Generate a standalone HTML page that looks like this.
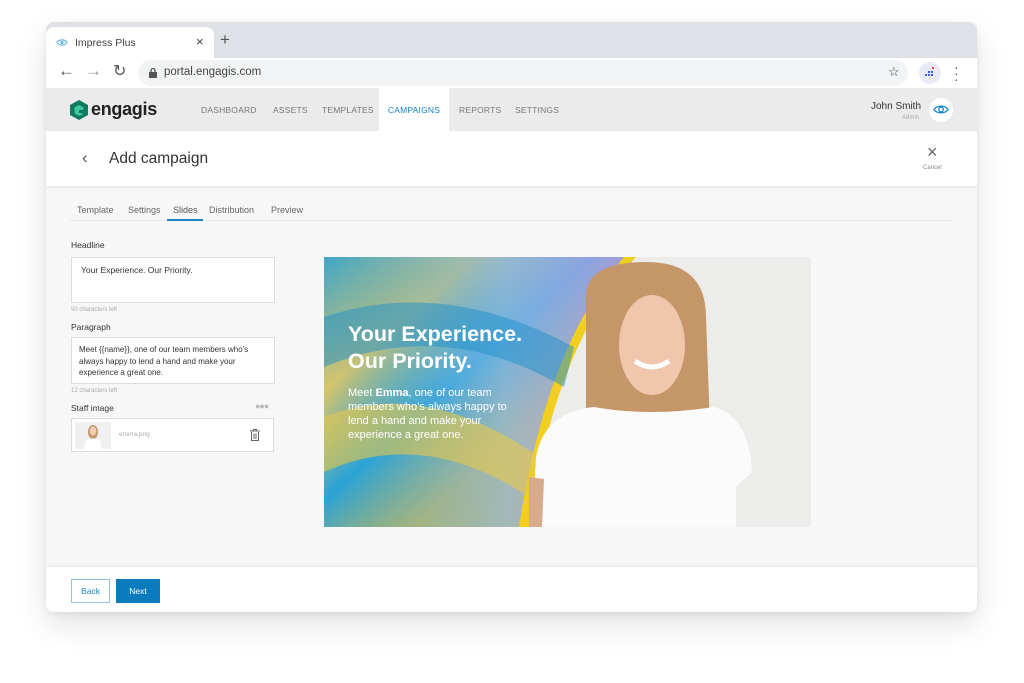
<!DOCTYPE html>
<html><head><meta charset="utf-8"><style>
*{margin:0;padding:0;box-sizing:border-box}
body{width:1024px;height:683px;background:#fff;font-family:"Liberation Sans",sans-serif;position:relative;overflow:hidden}
.win{position:absolute;left:46px;top:22px;width:931px;height:590px;border-radius:8px;background:#f7f7f7;box-shadow:0 12px 30px rgba(0,0,0,.12),0 2px 6px rgba(0,0,0,.06);overflow:hidden}
.abs{position:absolute}
.tabbar{left:0;top:0;width:931px;height:36px;background:#dee1e6}
.tab{left:0;top:5px;width:168px;height:31px;background:#fff;border-radius:8px 8px 0 0}
.addr{left:0;top:36px;width:931px;height:30px;background:#fff}
.url{left:92px;top:2px;width:770px;height:26px;background:#f1f3f4;border-radius:13px}
.nav{left:0;top:66px;width:931px;height:43px;background:#ebebeb}
.navi{top:0;height:43px;line-height:45px;font-size:8.5px;color:#777;letter-spacing:.2px}
.head{left:0;top:109px;width:931px;height:55px;background:#fff;box-shadow:0 2px 3px rgba(0,0,0,.06)}
.foot{left:0;top:545px;width:931px;height:45px;background:#fff;box-shadow:0 -2px 3px rgba(0,0,0,.05)}
.lbl{font-size:8.5px;color:#333}
.tb{font-size:9px;color:#666}
.box{background:#fff;border:1px solid #ddd}
.small{font-size:6px;color:#aaa}
</style></head><body>
<div class="win">
 <div class="abs tabbar"></div>
 <div class="abs tab">
  <svg class="abs" style="left:10px;top:11px" width="12" height="9" viewBox="0 0 12 9"><path d="M1 4.5C3 1 9 1 11 4.5 9 8 3 8 1 4.5Z" fill="none" stroke="#6ab4e8" stroke-width="1.2"/><circle cx="6" cy="4.5" r="1.6" fill="#6ab4e8"/></svg>
  <div class="abs" style="left:29px;top:10px;font-size:10.5px;color:#444">Impress Plus</div>
  <div class="abs" style="left:150px;top:7px;font-size:13px;color:#444">×</div>
 </div>
 <div class="abs" style="left:174px;top:9px;font-size:17px;color:#555;line-height:17px">+</div>
 <div class="abs addr">
  <div class="abs" style="left:12px;top:3px;font-size:17px;color:#555">←</div>
  <div class="abs" style="left:39px;top:3px;font-size:17px;color:#999">→</div>
  <div class="abs" style="left:67px;top:3px;font-size:16px;color:#555">↻</div>
  <div class="abs url">
   <svg class="abs" style="left:11px;top:8px" width="8" height="10"><rect x="0" y="4" width="8" height="6" fill="#555"/><path d="M2 4V2.5a2 2 0 0 1 4 0V4" stroke="#555" fill="none" stroke-width="1.3"/></svg>
   <div class="abs" style="left:26px;top:6px;font-size:11.5px;color:#444">portal.engagis.com</div>
   <div class="abs" style="left:750px;top:4px;font-size:13px;color:#444">☆</div>
  </div>
  <div class="abs" style="left:873px;top:4px;width:22px;height:22px;border-radius:11px;background:#e8eaf6"></div>
  <svg class="abs" style="left:878px;top:9px" width="12" height="12"><g fill="#3b5bd9"><rect x="1" y="7" width="2" height="2"/><rect x="4" y="7" width="2" height="2"/><rect x="7" y="7" width="2" height="2"/><rect x="4" y="4" width="2" height="2"/><rect x="7" y="4" width="2" height="2"/></g><rect x="8" y="0" width="2" height="2" fill="#e33"/></svg>
  <div class="abs" style="left:908px;top:6px;font-size:14px;color:#555;line-height:6px;width:4px;text-align:center">·<br>·<br>·</div>
 </div>
 <div class="abs nav">
  <svg class="abs" style="left:24px;top:12px" width="18" height="20" viewBox="0 0 18 20"><path d="M9 0L18 5V15L9 20L0 15V5Z" fill="#0f7a5f"/><path d="M9 5L13.5 7.5V10H9V12.5L13.5 14L9 16L4.5 13.5V7.5Z" fill="#3fc69a"/></svg>
  <div class="abs" style="left:45px;top:11px;font-size:18px;font-weight:bold;color:#222;letter-spacing:-.3px">engagis</div>
  <div class="abs navi" style="left:155px">DASHBOARD</div>
  <div class="abs navi" style="left:227px">ASSETS</div>
  <div class="abs navi" style="left:276px">TEMPLATES</div>
  <div class="abs navi" style="left:333px;width:70px;background:#fff;text-align:center;color:#1a84c5">CAMPAIGNS</div>
  <div class="abs navi" style="left:413px">REPORTS</div>
  <div class="abs navi" style="left:469px">SETTINGS</div>
  <div class="abs" style="left:825px;top:13px;font-size:10px;color:#333">John Smith</div>
  <div class="abs" style="left:856px;top:27px;font-size:6px;color:#aaa">Admin</div>
  <div class="abs" style="left:883px;top:10px;width:24px;height:24px;border-radius:12px;background:#fff"></div>
  <svg class="abs" style="left:887px;top:16px" width="16" height="11" viewBox="0 0 16 11"><path d="M1 5.5C4 1 12 1 15 5.5 12 10 4 10 1 5.5Z" fill="none" stroke="#1a84c5" stroke-width="1.3"/><circle cx="8" cy="5.5" r="2.3" fill="none" stroke="#1a84c5" stroke-width="1.3"/></svg>
 </div>
 <div class="abs head">
  <div class="abs" style="left:36px;top:17px;font-size:17px;color:#555">‹</div>
  <div class="abs" style="left:63px;top:19px;font-size:15.5px;color:#333">Add campaign</div>
  <div class="abs" style="left:881px;top:12px;font-size:18px;color:#666;line-height:18px">×</div>
  <div class="abs" style="left:877px;top:34px;font-size:6px;color:#888">Cancel</div>
 </div>
 <div class="abs" style="left:24px;top:198px;width:882px;height:1px;background:#e6e6e6"></div>
 <div class="abs tb" style="left:31px;top:183px">Template</div>
 <div class="abs tb" style="left:82px;top:183px">Settings</div>
 <div class="abs tb" style="left:127px;top:183px;color:#555">Slides</div>
 <div class="abs" style="left:121px;top:197px;width:36px;height:2px;background:#1a84c5"></div>
 <div class="abs tb" style="left:163px;top:183px">Distribution</div>
 <div class="abs tb" style="left:225px;top:183px">Preview</div>
 <div class="abs lbl" style="left:25px;top:218px">Headline</div>
 <div class="abs box" style="left:25px;top:235px;width:204px;height:46px"><div style="font-size:8.5px;color:#333;padding:7px 9px">Your Experience. Our Priority.</div></div>
 <div class="abs small" style="left:25px;top:285px">50 characters left</div>
 <div class="abs lbl" style="left:25px;top:300px">Paragraph</div>
 <div class="abs box" style="left:25px;top:315px;width:204px;height:47px"><div style="font-size:8px;color:#333;padding:6px 7px;line-height:11.5px">Meet {{name}}, one of our team members who’s always happy to lend a hand and make your experience a great one.</div></div>
 <div class="abs small" style="left:25px;top:366px">12 characters left</div>
 <div class="abs lbl" style="left:25px;top:381px">Staff image</div>
 <div class="abs" style="left:209px;top:379px;font-size:9px;color:#bbb;letter-spacing:-1px">●●●</div>
 <div class="abs box" style="left:25px;top:396px;width:203px;height:34px">
  <div class="abs" style="left:3px;top:3px;width:36px;height:27px;background:#f0f0f0"></div>
  <svg class="abs" style="left:3px;top:3px" width="36" height="27"><ellipse cx="18" cy="10" rx="5" ry="7" fill="#c49a6c"/><ellipse cx="18" cy="9" rx="3.3" ry="4.5" fill="#f1cdb5"/><path d="M9 27L11 18Q18 15 25 18L27 27Z" fill="#fff"/></svg>
  <div class="abs" style="left:47px;top:12px;font-size:6.5px;color:#aaa">emma.png</div>
  <svg class="abs" style="left:178px;top:10px" width="10" height="12" viewBox="0 0 10 12"><path d="M0 2H10M3.5 2V.5H6.5V2M1.5 3V11.5H8.5V3M4 4.5V10M6 4.5V10" stroke="#666" fill="none" stroke-width="1"/></svg>
 </div>
 <svg class="abs" style="left:278px;top:235px" width="487" height="270" viewBox="0 0 487 270">
  <defs>
   <linearGradient id="g1" x1="0" y1="0" x2="1" y2="1">
    <stop offset="0" stop-color="#3fa6c9"/><stop offset=".25" stop-color="#d9c56a"/><stop offset=".45" stop-color="#2aa3d6"/><stop offset=".65" stop-color="#d0b84d"/><stop offset="1" stop-color="#e5c03a"/>
   </linearGradient>
   <linearGradient id="g2" x1="0" y1="0" x2="1" y2="0"><stop offset="0" stop-color="#1a9fd8" stop-opacity="0"/><stop offset=".6" stop-color="#8db8e8" stop-opacity=".7"/><stop offset="1" stop-color="#b59be0" stop-opacity=".8"/></linearGradient>
  </defs>
  <rect width="487" height="270" fill="#ececea"/>
  <path d="M0 0H312Q230 90 205 270H0Z" fill="#f2cf1f"/>
  <path d="M0 0H300Q222 90 195 270H0Z" fill="url(#g1)"/>
  <path d="M0 0H300Q222 90 195 270H0Z" fill="url(#g2)"/>
  <path d="M0 60Q120 20 250 90L240 130Q120 60 0 110Z" fill="#1e8fc9" opacity=".5"/>
  <path d="M0 160Q100 120 215 200L205 240Q100 170 0 215Z" fill="#e8c84a" opacity=".6"/>
  <path d="M262 40Q262 5 322 5Q382 5 382 60L386 170Q330 185 262 165Z" fill="#c59668"/>
  <ellipse cx="328" cy="88" rx="33" ry="50" fill="#f0c7ad"/>
  <path d="M311 104Q328 116 345 104" stroke="#fff" stroke-width="5" fill="none"/>
  <path d="M208 270L212 200Q220 155 270 150Q325 160 390 150Q425 160 428 215L412 230V270Z" fill="#fbfbfb"/>
  <path d="M205 220L220 222L218 270H205Z" fill="#d9ab8e"/>
 </svg>
 <div class="abs" style="left:302px;top:299px;color:#fff;font-size:21.5px;font-weight:bold;line-height:27px">Your Experience.<br>Our Priority.</div>
 <div class="abs" style="left:302px;top:364px;color:#fff;font-size:11px;line-height:14px;width:163px">Meet <b>Emma</b>, one of our team members who’s always happy to lend a hand and make your experience a great one.</div>
 <div class="abs foot">
  <div class="abs" style="left:25px;top:12px;width:39px;height:24px;border:1px solid #8cc3e6;color:#1a84c5;font-size:8.5px;text-align:center;line-height:22px;background:#fff">Back</div>
  <div class="abs" style="left:70px;top:12px;width:44px;height:24px;background:#0b7bbd;color:#fff;font-size:8.5px;text-align:center;line-height:24px">Next</div>
 </div>
</div>
</body></html>
